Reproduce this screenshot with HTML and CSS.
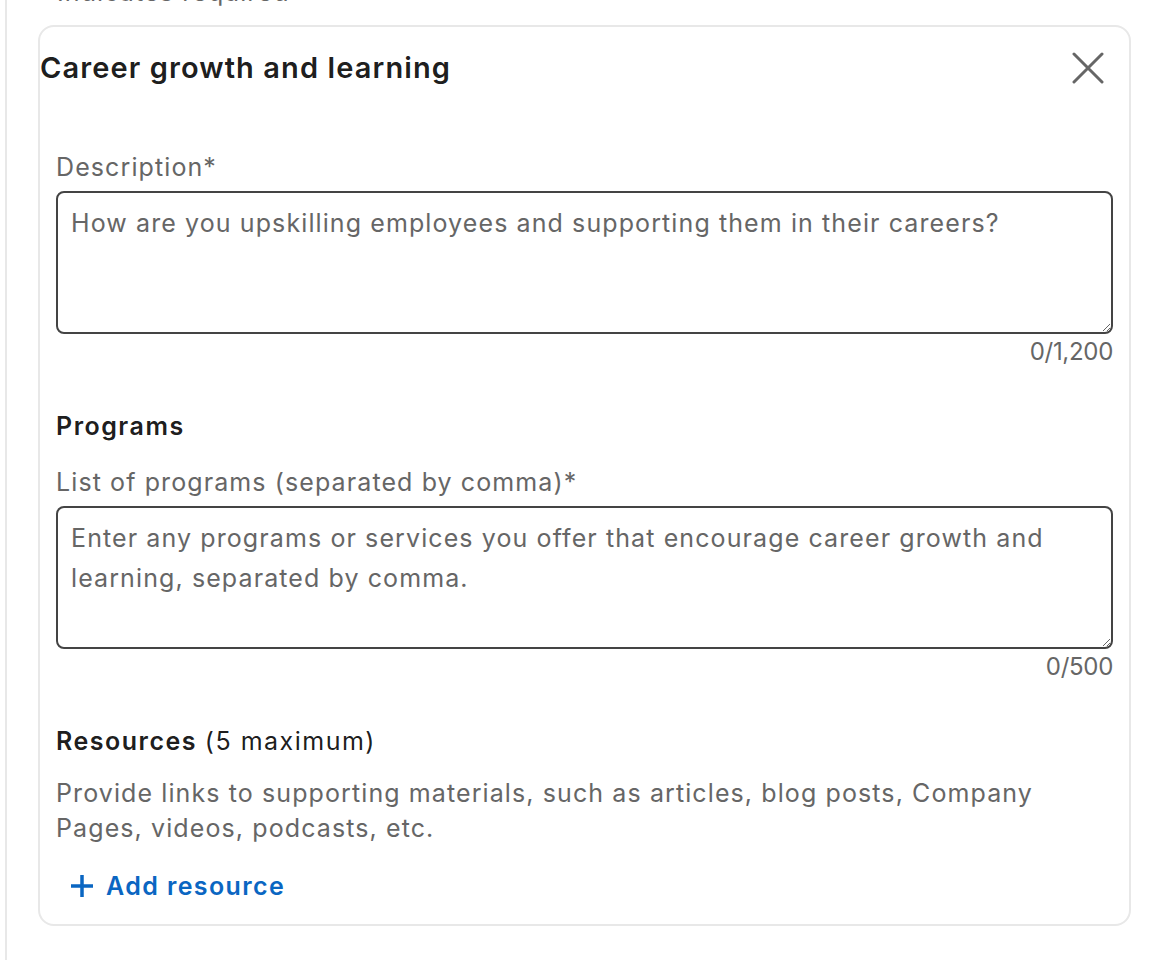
FILE: index.html
```html
<!DOCTYPE html>
<html lang="en">
<head>
<meta charset="utf-8">
<title>Career growth and learning</title>
<link rel="stylesheet" href="styles.css">
</head>
<body>
<div class="panel">
  <p class="required-note">Indicates required</p>
  <section class="card">
    <header class="card-header">
      <h2 class="card-title">Career growth and learning</h2>
      <button class="close-btn" type="button" aria-label="Dismiss">
        <svg width="32" height="32" viewBox="0 0 32 32" aria-hidden="true">
          <path d="M2 2 L30 30 M30 2 L2 30" stroke="#666666" stroke-width="3" stroke-linecap="round" fill="none"/>
        </svg>
      </button>
    </header>

    <div class="field">
      <label class="field-label" for="desc">Description*</label>
      <textarea id="desc" class="field-input" placeholder="How are you upskilling employees and supporting them in their careers?"></textarea>
      <div class="counter">0/1,200</div>
    </div>

    <h3 class="section-title">Programs</h3>
    <div class="field field-tight">
      <label class="field-label" for="prog">List of programs (separated by comma)*</label>
      <textarea id="prog" class="field-input" placeholder="Enter any programs or services you offer that encourage career growth and learning, separated by comma."></textarea>
      <div class="counter">0/500</div>
    </div>

    <h3 class="section-title">Resources <span class="section-note">(5 maximum)</span></h3>
    <p class="help-text">Provide links to supporting materials, such as articles, blog posts, Company Pages, videos, podcasts, etc.</p>
    <button class="add-btn" type="button">
      <svg width="24" height="24" viewBox="0 0 24 24" aria-hidden="true">
        <path d="M12 1 V23 M1 12 H23" stroke="#0a66c2" stroke-width="3.5" fill="none"/>
      </svg>
      <span>Add resource</span>
    </button>
  </section>
</div>
</body>
</html>
```

FILE: styles.css
```css
* {
  box-sizing: border-box;
}

html, body {
  margin: 0;
  padding: 0;
  background: #ffffff;
  height: 100%;
  overflow: hidden;
}

body {
  font-family: Inter, "Noto Sans", "Liberation Sans", sans-serif;
  font-size: 25px;
  line-height: 28px;
  letter-spacing: 1.1px;
  color: rgba(0, 0, 0, 0.9);
}

.panel {
  display: flow-root;
  margin-left: 5px;
  border-left: 2px solid #e8e8e8;
  min-height: 100%;
  padding-left: 31px;
  padding-right: 27px;
}

.required-note {
  margin: -22px 0 0 0;
  padding-left: 19px;
  color: #666666;
  line-height: 28px;
}

.card {
  margin-top: 19px;
  border: 2px solid #e8e8e8;
  border-radius: 16px;
  padding: 23px 16px 18px 16px;
  width: 1093px;
}

.card-header {
  display: flex;
  align-items: center;
  justify-content: space-between;
  margin-left: -16px;
  margin-right: 9px;
}

.card-title {
  margin: 0;
  font-size: 29px;
  line-height: 36px;
  font-weight: 600;
  letter-spacing: 1.1px;
  color: rgba(0, 0, 0, 0.9);
}

.close-btn {
  border: 0;
  background: transparent;
  padding: 0;
  width: 32px;
  height: 32px;
  display: flex;
  align-items: center;
  justify-content: center;
  cursor: pointer;
}

.field {
  display: flex;
  flex-direction: column;
  margin-top: 67px;
}

.field-tight {
  margin-top: 28px;
}

.field-label {
  color: #666666;
  line-height: 28px;
  margin-bottom: 10px;
}

.field-input {
  display: block;
  width: 100%;
  height: 143px;
  border: 2px solid #444444;
  border-radius: 8px;
  padding: 10px 13px;
  font-family: inherit;
  font-size: 25px;
  letter-spacing: 1.1px;
  line-height: 40px;
  color: rgba(0, 0, 0, 0.9);
  resize: vertical;
  outline: none;
}

.field-input::placeholder {
  color: #666666;
  opacity: 1;
}

.counter {
  text-align: right;
  color: #666666;
  font-size: 24px;
  letter-spacing: -0.3px;
  line-height: 28px;
  margin-top: 4px;
}

.section-title {
  margin: 46px 0 0 0;
  font-size: 25px;
  line-height: 28px;
  font-weight: 600;
  letter-spacing: 1.5px;
  color: rgba(0, 0, 0, 0.9);
}

.section-note {
  font-weight: 400;
}

.help-text {
  margin: 21px 0 0 0;
  color: #666666;
  line-height: 35px;
}

.add-btn {
  margin-top: 20px;
  display: inline-flex;
  align-items: center;
  gap: 12px;
  height: 40px;
  padding: 0 14px;
  border: 0;
  background: transparent;
  color: #0a66c2;
  font-family: inherit;
  font-size: 25px;
  letter-spacing: 1.4px;
  font-weight: 600;
  line-height: 28px;
  cursor: pointer;
}
```
